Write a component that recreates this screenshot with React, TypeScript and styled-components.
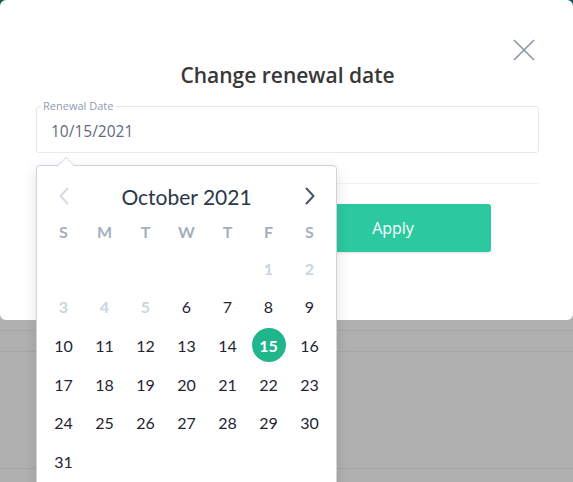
import React from 'react'
import styled, { createGlobalStyle } from 'styled-components'

const GlobalStyle = createGlobalStyle`
  html, body {
    margin: 0;
    padding: 0;
  }
  body {
    font-family: 'Open Sans', 'Liberation Sans', sans-serif;
    overflow: hidden;
  }
`

const WEEKDAYS = ['S', 'M', 'T', 'W', 'T', 'F', 'S']
const FIRST_OFFSET = 5
const DISABLED_UNTIL = 5
const SELECTED = 15

const ChevronLeft = ({ color }: { color: string }) => (
  <svg width="10" height="18" viewBox="0 0 10 18" fill="none">
    <path d="M8.5 1.5 L1.5 9 L8.5 16.5" stroke={color} strokeWidth="2" strokeLinecap="round" strokeLinejoin="round" />
  </svg>
)

const ChevronRight = ({ color }: { color: string }) => (
  <svg width="10" height="18" viewBox="0 0 10 18" fill="none">
    <path d="M1.5 1.5 L8.5 9 L1.5 16.5" stroke={color} strokeWidth="2" strokeLinecap="round" strokeLinejoin="round" />
  </svg>
)

export default function App() {
  const cells: (number | null)[] = []
  for (let i = 0; i < FIRST_OFFSET; i++) cells.push(null)
  for (let d = 1; d <= 31; d++) cells.push(d)

  return (
    <Page>
      <GlobalStyle />
      <Modal>
        <CloseButton aria-label="Close">
          <svg width="22" height="22" viewBox="0 0 22 22">
            <path d="M1 1 L21 21 M21 1 L1 21" stroke="#8a94a8" strokeWidth="1.6" />
          </svg>
        </CloseButton>
        <Title>Change renewal date</Title>
        <FieldWrap>
          <Field>
            <Label>Renewal Date</Label>
            <Value>10/15/2021</Value>
          </Field>
          <Calendar>
            <CalHeader>
              <NavBtn>
                <ChevronLeft color="#d6dbe2" />
              </NavBtn>
              <MonthTitle>October 2021</MonthTitle>
              <NavBtn>
                <ChevronRight color="#4a5568" />
              </NavBtn>
            </CalHeader>
            <DayGrid>
              {WEEKDAYS.map((w, i) => (
                <Weekday key={i}>{w}</Weekday>
              ))}
              {cells.map((d, i) =>
                d === null ? (
                  <Day key={i} />
                ) : (
                  <Day key={i} $disabled={d <= DISABLED_UNTIL}>
                    {d === SELECTED ? <Selected>{d}</Selected> : d}
                  </Day>
                )
              )}
            </DayGrid>
          </Calendar>
        </FieldWrap>
        <Divider />
        <Actions>
          <Button $variant="secondary">Cancel</Button>
          <Button $variant="primary">Apply</Button>
        </Actions>
      </Modal>
      <TableRow $h={10} />
      <TableRow $h={20} />
      <TableRow $h={116} />
    </Page>
  )
}

const Page = styled.div`
  width: 573px;
  height: 482px;
  overflow: hidden;
  background: linear-gradient(#0f5a4c 0 12px, #b0b0b0 12px);
`

const Modal = styled.div`
  position: relative;
  height: 320px;
  box-sizing: border-box;
  background: #fff;
  border-radius: 6px;
  padding: 60px 34px 0 36px;
  z-index: 1;
`

const CloseButton = styled.button`
  position: absolute;
  top: 39px;
  right: 38px;
  padding: 0;
  border: none;
  background: none;
  display: flex;
`

const Title = styled.h2`
  margin: 0 0 16px;
  text-align: center;
  font-size: 21px;
  font-weight: 600;
  color: #383838;
  line-height: 30px;
`

const FieldWrap = styled.div`
  position: relative;
`

const Field = styled.div`
  position: relative;
  height: 47px;
  box-sizing: border-box;
  border: 1px solid #e6e9ee;
  border-radius: 3px;
  display: flex;
  align-items: center;
  padding: 0 14px;
`

const Label = styled.span`
  position: absolute;
  top: -8px;
  left: 4px;
  padding: 0 2px;
  background: #fff;
  font-size: 11px;
  line-height: 14px;
  color: #8f9bb3;
`

const Value = styled.span`
  font-size: 15.5px;
  color: #5f6a7f;
  padding-top: 2px;
`

const Calendar = styled.div`
  position: absolute;
  top: 59px;
  left: 0;
  width: 301px;
  box-sizing: border-box;
  background: #fff;
  border: 1px solid #cbd4e1;
  border-radius: 4px;
  box-shadow: 0 4px 14px rgba(0, 0, 0, 0.12);
  padding: 12px 6px 20px;
  font-family: 'Lato', 'Open Sans', sans-serif;
  z-index: 2;

  &::before,
  &::after {
    content: '';
    position: absolute;
    left: 20px;
    border: 9px solid transparent;
    border-top: none;
  }
  &::before {
    top: -9px;
    border-bottom-color: #cbd4e1;
  }
  &::after {
    top: -8px;
    border-bottom-color: #fff;
  }
`

const CalHeader = styled.div`
  display: grid;
  grid-template-columns: 41px 1fr 41px;
  align-items: center;
  height: 36px;
`

const NavBtn = styled.span`
  display: flex;
  justify-content: center;
  align-items: center;
`

const MonthTitle = styled.div`
  text-align: center;
  font-size: 21px;
  color: #2d3748;
`

const DayGrid = styled.div`
  display: grid;
  grid-template-columns: repeat(7, 41px);
  grid-template-rows: 35px;
  grid-auto-rows: 38.6px;
`

const Weekday = styled.div`
  display: flex;
  align-items: center;
  justify-content: center;
  font-size: 16px;
  font-weight: 700;
  color: #a3b0c2;
`

const Day = styled.div<{ $disabled?: boolean }>`
  display: flex;
  align-items: center;
  justify-content: center;
  font-size: 16px;
  color: ${(p) => (p.$disabled ? '#cbd5e0' : '#1f2533')};
  font-weight: ${(p) => (p.$disabled ? 700 : 400)};
`

const Selected = styled.span`
  width: 34px;
  height: 34px;
  border-radius: 50%;
  background: #20b68c;
  color: #fff;
  font-weight: 700;
  display: flex;
  align-items: center;
  justify-content: center;
`

const Divider = styled.div`
  height: 1px;
  background: #f1f2f4;
  margin: 30px 0 20px;
`

const Actions = styled.div`
  display: flex;
  justify-content: center;
  gap: 15px;
`

const Button = styled.button<{ $variant: 'primary' | 'secondary' }>`
  width: 196px;
  height: 48px;
  border: none;
  border-radius: 3px;
  font-family: 'Open Sans', sans-serif;
  font-size: 16px;
  background: ${(p) => (p.$variant === 'primary' ? '#2cc9a0' : '#eef1f5')};
  color: ${(p) => (p.$variant === 'primary' ? '#fff' : '#4a5568')};
  box-shadow: 0 1px 3px rgba(0, 0, 0, 0.12);
`

const TableRow = styled.div<{ $h: number }>`
  height: ${(p) => p.$h}px;
  border-bottom: 1px solid #a6a6a6;
`
